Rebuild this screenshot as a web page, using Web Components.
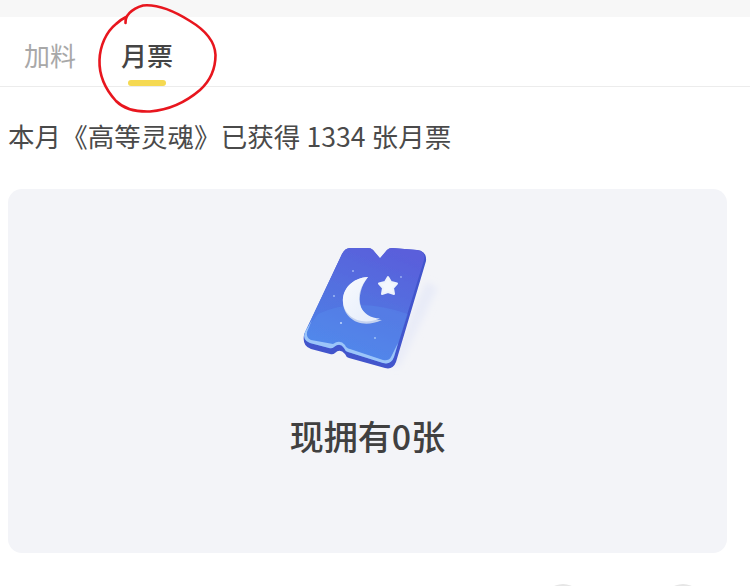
<!doctype html>
<html lang="zh">
<head>
<meta charset="utf-8">
<title>月票</title>
<style>
  html, body { margin: 0; height: 586px; overflow: hidden; background: #fff; }
  body { font-family: "Noto Sans CJK SC", "Liberation Sans", sans-serif; color: #444; position: relative; }
</style>
</head>
<body>
<top-strip></top-strip>
<tab-bar>
  <tab-item>加料</tab-item>
  <tab-item active>月票</tab-item>
</tab-bar>
<vote-summary>本月《高等灵魂》已获得 1334 张月票</vote-summary>
<ticket-card>现拥有0张</ticket-card>
<footer-dots></footer-dots>
<circle-mark></circle-mark>

<script>
class TopStrip extends HTMLElement {
  constructor () {
    super()
    this.attachShadow({ mode: 'open' }).innerHTML = `
      <style>
        :host { display: block; height: 17px; background: #f7f7f7; }
      </style>
    `
  }
}

class TabBar extends HTMLElement {
  constructor () {
    super()
    this.attachShadow({ mode: 'open' }).innerHTML = `
      <style>
        :host {
          display: flex;
          gap: 45px;
          height: 69px;
          padding-left: 24px;
          border-bottom: 1px solid #ececec;
        }
      </style>
      <slot></slot>
    `
  }
}

class TabItem extends HTMLElement {
  constructor () {
    super()
    this.attachShadow({ mode: 'open' }).innerHTML = `
      <style>
        :host {
          display: flex;
          flex-direction: column;
          align-items: center;
          font-size: 26px;
          line-height: 38px;
          padding-top: 19px;
          color: #a8a8a8;
        }
        :host([active]) { color: #444; font-weight: 500; }
        .bar { display: none; width: 38px; height: 6px; margin-top: 6px; border-radius: 3px; background: #f5d952; }
        :host([active]) .bar { display: block; }
      </style>
      <slot></slot>
      <div class="bar"></div>
    `
  }
}

class VoteSummary extends HTMLElement {
  constructor () {
    super()
    this.attachShadow({ mode: 'open' }).innerHTML = `
      <style>
        :host {
          display: block;
          padding: 29px 0 33px 8px;
          font-size: 26.500px;
          letter-spacing: 0.08px;
          line-height: 40px;
          color: #4a4a4a;
          white-space: nowrap;
        }
      </style>
      <slot></slot>
    `
  }
}

class TicketIcon extends HTMLElement {
  constructor () {
    super()
    this.attachShadow({ mode: 'open' }).innerHTML = `
      <style>
        :host { display: block; width: 175px; height: 150px; }
        svg { display: block; }
      </style>
      <svg width="175" height="150" viewBox="0 0 175 150" xmlns="http://www.w3.org/2000/svg">
        <defs>
          <linearGradient id="face" x1="0.7" y1="0" x2="0.3" y2="1">
            <stop offset="0" stop-color="#5a5fdb"/>
            <stop offset="0.5" stop-color="#5272e0"/>
            <stop offset="1" stop-color="#4e84ea"/>
          </linearGradient>
          <linearGradient id="glow" x1="0" y1="0" x2="1" y2="1">
            <stop offset="0" stop-color="#dfe4f6"/>
            <stop offset="1" stop-color="#f3f4f9"/>
          </linearGradient>
          <linearGradient id="moon" x1="0" y1="0" x2="1" y2="1">
            <stop offset="0" stop-color="#f8fafe"/>
            <stop offset="1" stop-color="#e4ecfa"/>
          </linearGradient>
          <filter id="soft" x="-10%" y="-10%" width="120%" height="120%">
            <feGaussianBlur stdDeviation="0.6"/>
          </filter>
          <filter id="softer" x="-30%" y="-30%" width="160%" height="160%">
            <feGaussianBlur stdDeviation="3"/>
          </filter>
        </defs>
        <path d="M146 52 L158 58 L120 137 L108 136 Z" fill="url(#glow)" filter="url(#softer)"/>
        <g filter="url(#soft)">
          <path d="M70 18 L88 18 Q91 18 93 20 L100 29 L107 20 Q109 18 112 18 L137 20 Q147 21 146 31 L116 132 Q113 140 105 138 L69 128 Q66 127 65 124 Q60 118 55 123 Q53 125 50 124 L31 119 Q22 116 24 105 L62 24 Q65 18 70 18 Z" fill="#4254cc"/>
          <path d="M70 18 L88 18 Q91 18 93 20 L100 28 L107 20 Q109 18 112 18 L137 20 Q146 21 144 30 L114 127 Q111 135 103 133 L68 122 Q65 121 64 118 Q60 112 54 117 Q52 119 49 118 L30 113 Q22 110 25 102 L62 24 Q65 18 70 18 Z" fill="url(#face)"/>
          <path d="M38 84 Q76 66 128 84 L114 127 Q111 135 103 133 L68 122 Q65 121 64 118 Q60 112 54 117 Q52 119 49 118 L30 113 Q22 110 25 102 Z" fill="#5aa0f5" opacity="0.22"/>
          <path d="M25 102 Q22 110 30 113 L49 118 Q52 119 54 117 Q60 112 64 118 Q65 121 68 122 L103 133 Q111 135 114 127 L118 113 L111 127 Q109 131 103 130 L70 119 Q66 118 65 115 Q60 109 53 114 L31 110 Q26 108 27 102 L32 90 Z" fill="#a9d0fb" opacity="0.85"/>
          <path d="M88 47 C72 48 62 60 63 73 C64 88 80 100 102 90 C92 90 84 86 81 77 C78 67 81 56 88 47 Z" fill="#c4d2ef"/>
          <path d="M88 47 C72 48 62 59 63 72 C64 86 80 97 100 88.500 C91 88 83 84 80 75 C77 66 81 55 88 47 Z" fill="url(#moon)"/>
          <path d="M108 47 L111 52 L117 53.500 L113 58 L114 64 L108 62 L102 64 L103 58 L99 53.500 L105 52 Z" fill="#f4f7fe" stroke="#eef3fc" stroke-width="2" stroke-linejoin="round"/>
          <circle cx="73" cy="41" r="1" fill="#9fb4f2"/>
          <circle cx="121" cy="47" r="0.9" fill="#9fb4f2"/>
          <circle cx="54" cy="66" r="0.9" fill="#a8c2f5"/>
          <circle cx="61" cy="93" r="1.1" fill="#bcd4fa"/>
          <circle cx="95" cy="108" r="0.9" fill="#a8c8f8"/>
        </g>
      </svg>
    `
  }
}

class TicketCard extends HTMLElement {
  constructor () {
    super()
    this.attachShadow({ mode: 'open' }).innerHTML = `
      <style>
        :host {
          display: flex;
          flex-direction: column;
          align-items: center;
          box-sizing: border-box;
          width: 719px;
          height: 364px;
          margin-left: 8px;
          padding-top: 41px;
          border-radius: 14px;
          background: #f3f4f8;
        }
        .count {
          margin-top: 33px;
          font-size: 34px;
          line-height: 46px;
          font-weight: 500;
          color: #404040;
        }
      </style>
      <ticket-icon></ticket-icon>
      <div class="count"><slot></slot></div>
    `
  }
}

class FooterDots extends HTMLElement {
  constructor () {
    super()
    this.attachShadow({ mode: 'open' }).innerHTML = `
      <style>
        :host {
          display: flex;
          gap: 80px;
          justify-content: flex-end;
          align-items: flex-start;
          height: 2px;
          margin-top: 31px;
          padding-right: 47px;
          overflow: hidden;
        }
        i { flex: none; width: 40px; height: 40px; border-radius: 50%; background: #e6e6e6; }
      </style>
      <i></i><i></i>
    `
  }
}

// hand-drawn red ring lying over the tabs
class CircleMark extends HTMLElement {
  constructor () {
    super()
    this.attachShadow({ mode: 'open' }).innerHTML = `
      <style>
        :host { position: absolute; left: 0; top: 0; width: 250px; height: 120px; pointer-events: none; }
        svg { display: block; }
      </style>
      <svg width="250" height="120" viewBox="0 0 250 120" xmlns="http://www.w3.org/2000/svg">
        <path d="M125.500 23 C125 16 131 9 143 5.500 C158 4 174 11 190 21 C205 30 215 42 215.500 55 C215.500 68 211 80 200 90 C186 102 168 110 150 111.500 C136 112 124 109 116 101 C106 90 99 75 99.500 60 C100 46 106 32 116 24 C119 21 122 19 126 17" fill="none" stroke="#e8161e" stroke-width="2.600" stroke-linecap="round"/>
      </svg>
    `
  }
}

customElements.define('top-strip', TopStrip)
customElements.define('tab-bar', TabBar)
customElements.define('tab-item', TabItem)
customElements.define('vote-summary', VoteSummary)
customElements.define('ticket-icon', TicketIcon)
customElements.define('ticket-card', TicketCard)
customElements.define('footer-dots', FooterDots)
customElements.define('circle-mark', CircleMark)
</script>
</body>
</html>
